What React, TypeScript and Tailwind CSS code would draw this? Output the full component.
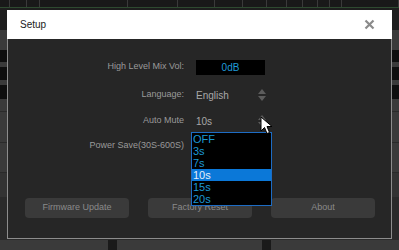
const ticks = [10, 17, 13, 88, 50, 37, 28, 24, 20, 16, 15, 12, 12, 57];

function Spinner() {
  return (
    <svg width="8" height="13" viewBox="0 0 8 13" className="shrink-0">
      <path d="M4 0 L8 5 L0 5 Z" fill="#5c5c5c" />
      <path d="M0 7 L8 7 L4 12 Z" fill="#5c5c5c" />
    </svg>
  );
}

function Cursor() {
  return (
    <svg width="13" height="19" viewBox="0 0 13 19" className="absolute left-[252px] top-[77px]">
      <path
        d="M1 1 L1 15 L4.5 11.5 L7 17.5 L9.5 16.5 L7 10.5 L12 10.5 Z"
        fill="#ffffff"
        stroke="#000000"
        strokeWidth="1"
        strokeLinejoin="round"
      />
    </svg>
  );
}

function Row({ label, children, className = "" }: { label: string; children?: React.ReactNode; className?: string }) {
  return (
    <div className={`flex h-[16px] items-center ${className}`}>
      <div className="w-[176px] shrink-0 text-right text-[9px] text-[#9a9a9a]">{label}</div>
      <div className="ml-[12px] flex items-center">{children}</div>
    </div>
  );
}

const options = ["OFF", "3s", "7s", "10s", "15s", "20s"];

export default function App() {
  return (
    <div
      className="relative h-[250px] w-[399px] overflow-hidden bg-[#1d1d1d]"
      style={{ fontFamily: '"Liberation Sans", Arial, sans-serif' }}
    >
      {/* app behind the dialog */}
      <div className="flex h-[7px] bg-[#191919]">
        {ticks.map((w, i) => (
          <div key={i} style={{ width: w }} className="h-full border-r border-[#3a3a3a]" />
        ))}
      </div>
      <div className="h-px bg-[#2e4a30]" />
      <div className="h-[22px] bg-[#1e1e1e]" />
      <div className="flex h-[220px] flex-col bg-[#3a3a3a]">
        <div className="h-[20px]" />
        <div className="h-[12px] bg-[#0e0e0e]" />
        <div className="h-[5px]" />
        <div className="h-[13px] bg-[#0e0e0e]" />
        <div className="h-[5px]" />
        <div className="h-[14px] bg-[#0e0e0e]" />
        <div className="h-[13px] border-b border-[#2a2a2a]" />
        <div className="h-[31px] border-b border-[#2a2a2a]" />
        <div className="h-[30px] border-b border-[#2a2a2a]" />
        <div className="h-[24px] bg-[#333333]" />
        <div className="h-[43px] bg-[#2a2a2a]" />
        <div className="flex flex-1 gap-[9px] bg-[#1a1a1a]">
          <div className="w-[108px] bg-[#3a3a3a]" />
          <div className="w-[145px] bg-[#3a3a3a]" />
          <div className="flex-1 bg-[#3a3a3a]" />
        </div>
      </div>

      {/* dialog */}
      <div className="absolute left-[7px] top-[10px] flex h-[229px] w-[385px] flex-col">
        <div className="flex h-[29px] items-center justify-between bg-white pl-[13px] pr-[17px]">
          <span className="text-[10px] text-[#222222]">Setup</span>
          <svg width="11" height="11" viewBox="0 0 11 11">
            <path d="M1.5 1.5 L9.5 9.5 M9.5 1.5 L1.5 9.5" stroke="#8a8a8a" strokeWidth="2.2" />
          </svg>
        </div>
        <div className="relative flex flex-1 flex-col border-x border-b border-[#8c8c8c] bg-[#262626]">
          <Row label="High Level Mix Vol:" className="mt-[20px]">
            <div className="flex h-[15px] w-[69px] items-center justify-center bg-black text-[10px] text-[#1f9ad8]">
              0dB
            </div>
          </Row>
          <Row label="Language:" className="mt-[12px]">
            <span className="w-[62px] text-[10px] text-[#a8a8a8]">English</span>
            <Spinner />
          </Row>
          <Row label="Auto Mute" className="mt-[10px]">
            <span className="w-[62px] text-[10px] text-[#a8a8a8]">10s</span>
            <Spinner />
          </Row>
          <Row label="Power Save(30S-600S)" className="mt-[9px]" />

          <div className="mt-[44px] flex gap-[19px] pl-[17px]">
            {["Firmware Update", "Factory Reset", "About"].map((b) => (
              <div
                key={b}
                className="flex h-[20px] w-[104px] items-center justify-center rounded-[4px] bg-[#3a3a3a] text-[9px] text-[#8a8a8a]"
              >
                {b}
              </div>
            ))}
          </div>

          {/* open dropdown */}
          <div className="absolute left-[183px] top-[93px] w-[81px] border border-[#1d6cc4] bg-black">
            {options.map((o) => (
              <div
                key={o}
                className={`flex h-[12px] items-center pl-[1px] text-[11px] leading-none ${
                  o === "10s" ? "bg-[#0b78d8] text-[#e4eef8]" : "text-[#1c98d4]"
                }`}
              >
                {o}
              </div>
            ))}
          </div>
          <Cursor />
        </div>
      </div>
    </div>
  );
}
